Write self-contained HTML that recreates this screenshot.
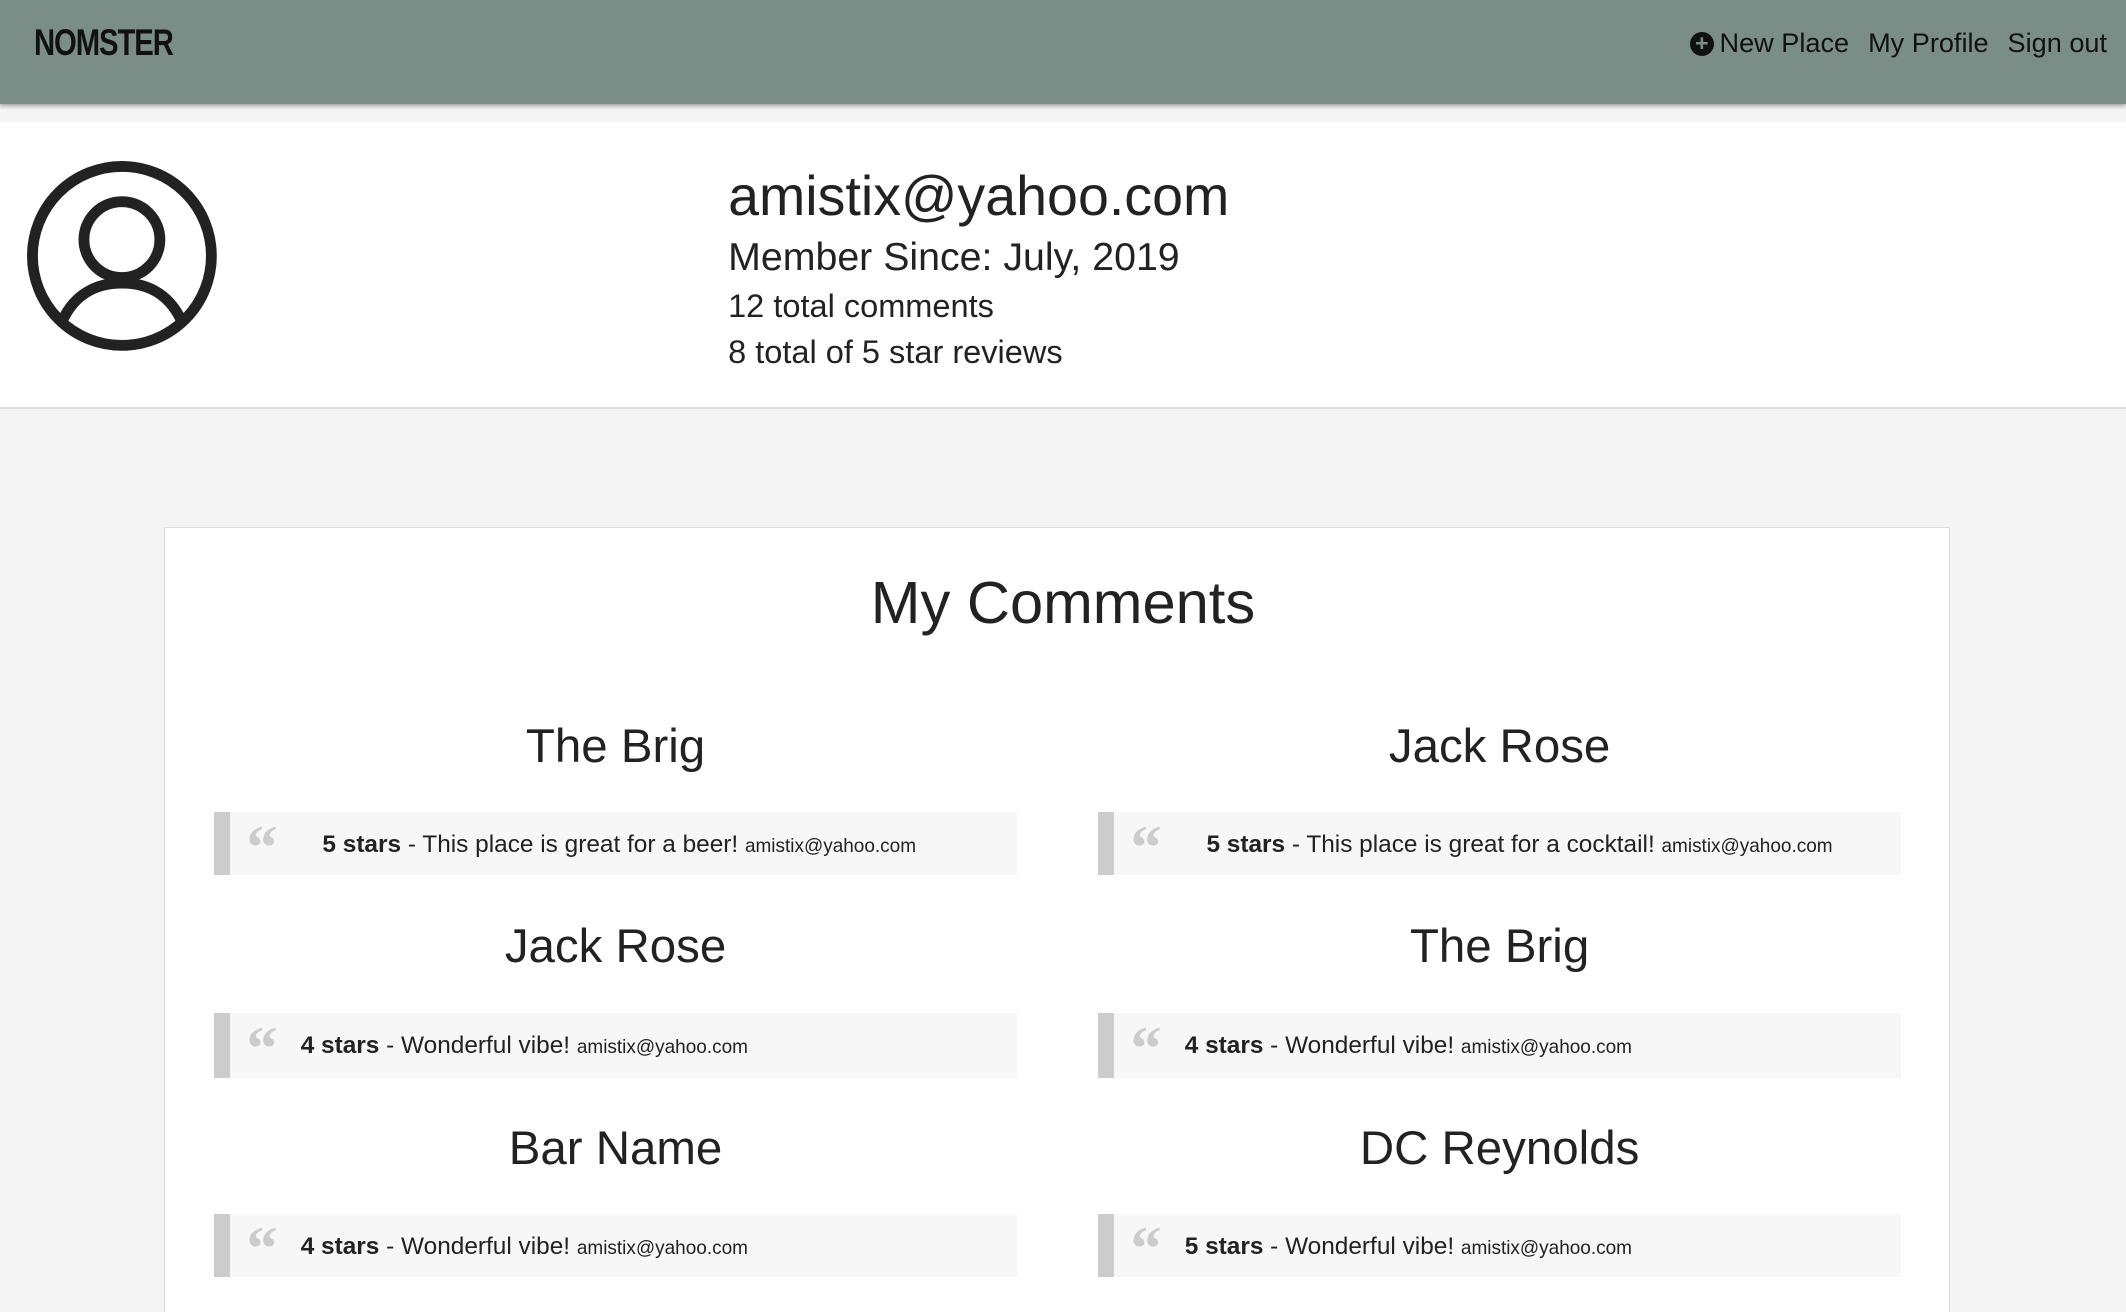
<!DOCTYPE html>
<html><head><meta charset="utf-8"><style>
html,body{margin:0;padding:0;overflow:hidden}
body{zoom:1.35587;width:1568px;height:968px;background:#f4f4f4;font-family:"Liberation Sans",sans-serif;color:#222;position:relative}
.nav{position:absolute;left:0;top:0;width:1568px;height:77px;background:#7a8d87;box-shadow:0 2px 3px rgba(0,0,0,.35)}
.logo{position:absolute;left:25px;top:16px;font-size:27px;font-weight:bold;letter-spacing:-1px;color:#111;transform:scaleX(.8);transform-origin:left}
.links{position:absolute;right:14px;top:20px;font-size:20px;color:#111}
.links span{margin-left:14px}
.plus{display:inline-block;width:18px;height:18px;border-radius:50%;background:#111;color:#7a8d87;font-size:17px;line-height:17px;text-align:center;font-weight:bold;vertical-align:1px;margin-right:4px}
.prof{position:absolute;left:0;top:90px;width:1568px;height:210px;background:#fff;border-bottom:2px solid #ddd}
.info{position:absolute;left:537px;top:29px;color:#222}
.card{position:absolute;left:121px;top:389px;width:1316px;height:600px;background:#fff;border:1px solid #ddd}
h1{position:absolute;left:0;width:100%;top:419px;margin:0;text-align:center;font-weight:normal;font-size:44px}
.t{position:absolute;width:592px;text-align:center;font-size:35px;margin:0}
.q{position:absolute;width:580px;height:46px;background:#f7f7f7;border-left:12px solid #ccc;font-size:18px;line-height:48px;box-sizing:content-box}
.q i{font-style:normal;color:#ccc;font-size:46px;font-family:"Liberation Serif",serif;font-weight:bold;position:absolute;left:12px;top:2px}
.q span{position:absolute;left:68px;white-space:nowrap}
.q small{font-size:14px}
</style></head><body>
<div class="nav"><div class="logo">NOMSTER</div>
<div class="links"><span><b class="plus">+</b>New Place</span><span>My Profile</span><span>Sign out</span></div></div>
<div class="prof">
<svg style="position:absolute;left:20px;top:29px" width="140" height="140" viewBox="0 0 140 140"><circle cx="70" cy="70" r="66" fill="none" stroke="#222" stroke-width="8"/><circle cx="70" cy="58" r="28" fill="none" stroke="#222" stroke-width="8"/><path d="M26 118 C36 96 54 90 70 90 C86 90 104 96 114 118" fill="none" stroke="#222" stroke-width="8"/></svg>
<div class="info"><div style="font-size:41px;line-height:52px">amistix@yahoo.com</div><div style="font-size:29px;line-height:38px">Member Since: July, 2019</div><div style="font-size:24px;line-height:34px">12 total comments</div><div style="font-size:24px;line-height:34px">8 total of 5 star reviews</div></div>
</div>
<div class="card"></div>
<h1>My Comments</h1>
<div class="t" style="left:158px;top:530px">The Brig</div>
<div class="q" style="left:158px;top:599px"><i>“</i><span><b>5 stars</b> - This place is great for a beer! <small>amistix@yahoo.com</small></span></div>
<div class="t" style="left:810px;top:530px">Jack Rose</div>
<div class="q" style="left:810px;top:599px"><i>“</i><span><b>5 stars</b> - This place is great for a cocktail! <small>amistix@yahoo.com</small></span></div>
<div class="t" style="left:158px;top:678px">Jack Rose</div>
<div class="q" style="left:158px;top:747px;height:48px"><i>“</i><span style="left:52px"><b>4 stars</b> - Wonderful vibe! <small>amistix@yahoo.com</small></span></div>
<div class="t" style="left:810px;top:678px">The Brig</div>
<div class="q" style="left:810px;top:747px;height:48px"><i>“</i><span style="left:52px"><b>4 stars</b> - Wonderful vibe! <small>amistix@yahoo.com</small></span></div>
<div class="t" style="left:158px;top:827px">Bar Name</div>
<div class="q" style="left:158px;top:895px;height:47px"><i>“</i><span style="left:52px"><b>4 stars</b> - Wonderful vibe! <small>amistix@yahoo.com</small></span></div>
<div class="t" style="left:810px;top:827px">DC Reynolds</div>
<div class="q" style="left:810px;top:895px;height:47px"><i>“</i><span style="left:52px"><b>5 stars</b> - Wonderful vibe! <small>amistix@yahoo.com</small></span></div>
</body></html>
